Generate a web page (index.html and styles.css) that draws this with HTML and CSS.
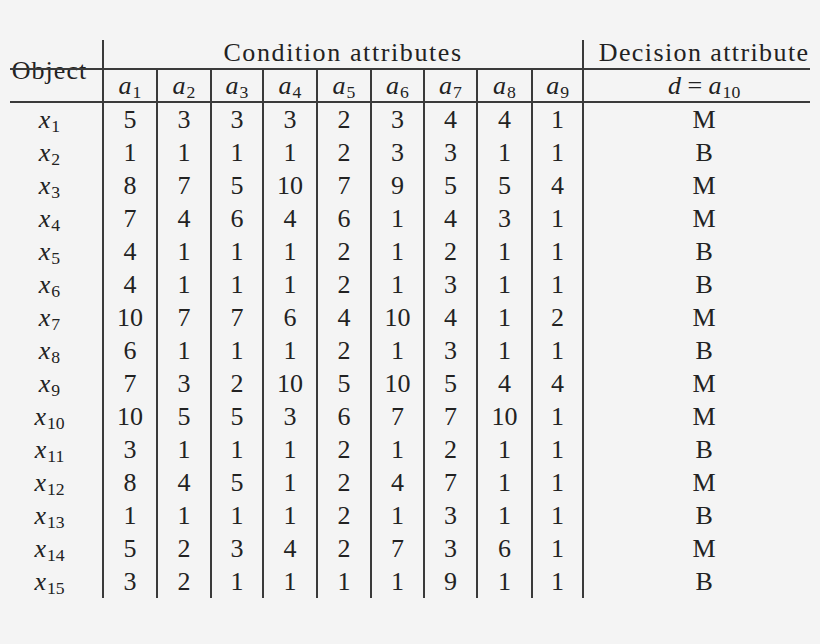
FILE: index.html
```html
<!DOCTYPE html>
<html>
<head>
<meta charset="utf-8">
<link rel="stylesheet" href="styles.css">
</head>
<body>
<table class="tbl">
  <colgroup>
    <col class="c-obj"><col class="c54"><col class="c54"><col class="c52"><col class="c54"><col class="c54"><col class="c53"><col class="c53"><col class="c55"><col class="c51"><col class="c-dec">
  </colgroup>
  <thead>
    <tr class="h1">
      <th class="obj" rowspan="2"><span class="obj-text">Object</span></th>
      <th class="cond" colspan="9">Condition attributes</th>
      <th class="dec">Decision attribute</th>
    </tr>
    <tr class="h2">
      <th class="a"><i>a</i><sub>1</sub></th>
      <th class="a"><i>a</i><sub>2</sub></th>
      <th class="a"><i>a</i><sub>3</sub></th>
      <th class="a"><i>a</i><sub>4</sub></th>
      <th class="a"><i>a</i><sub>5</sub></th>
      <th class="a"><i>a</i><sub>6</sub></th>
      <th class="a"><i>a</i><sub>7</sub></th>
      <th class="a"><i>a</i><sub>8</sub></th>
      <th class="a last"><i>a</i><sub>9</sub></th>
      <th class="dv"><i>d</i> = <i>a</i><sub>10</sub></th>
    </tr>
  </thead>
  <tbody>
    <tr><td class="lab"><i>x</i><sub>1</sub></td><td>5</td><td>3</td><td>3</td><td>3</td><td>2</td><td>3</td><td>4</td><td>4</td><td class="last">1</td><td class="dv">M</td></tr>
    <tr><td class="lab"><i>x</i><sub>2</sub></td><td>1</td><td>1</td><td>1</td><td>1</td><td>2</td><td>3</td><td>3</td><td>1</td><td class="last">1</td><td class="dv">B</td></tr>
    <tr><td class="lab"><i>x</i><sub>3</sub></td><td>8</td><td>7</td><td>5</td><td>10</td><td>7</td><td>9</td><td>5</td><td>5</td><td class="last">4</td><td class="dv">M</td></tr>
    <tr><td class="lab"><i>x</i><sub>4</sub></td><td>7</td><td>4</td><td>6</td><td>4</td><td>6</td><td>1</td><td>4</td><td>3</td><td class="last">1</td><td class="dv">M</td></tr>
    <tr><td class="lab"><i>x</i><sub>5</sub></td><td>4</td><td>1</td><td>1</td><td>1</td><td>2</td><td>1</td><td>2</td><td>1</td><td class="last">1</td><td class="dv">B</td></tr>
    <tr><td class="lab"><i>x</i><sub>6</sub></td><td>4</td><td>1</td><td>1</td><td>1</td><td>2</td><td>1</td><td>3</td><td>1</td><td class="last">1</td><td class="dv">B</td></tr>
    <tr><td class="lab"><i>x</i><sub>7</sub></td><td>10</td><td>7</td><td>7</td><td>6</td><td>4</td><td>10</td><td>4</td><td>1</td><td class="last">2</td><td class="dv">M</td></tr>
    <tr><td class="lab"><i>x</i><sub>8</sub></td><td>6</td><td>1</td><td>1</td><td>1</td><td>2</td><td>1</td><td>3</td><td>1</td><td class="last">1</td><td class="dv">B</td></tr>
    <tr><td class="lab"><i>x</i><sub>9</sub></td><td>7</td><td>3</td><td>2</td><td>10</td><td>5</td><td>10</td><td>5</td><td>4</td><td class="last">4</td><td class="dv">M</td></tr>
    <tr><td class="lab"><i>x</i><sub>10</sub></td><td>10</td><td>5</td><td>5</td><td>3</td><td>6</td><td>7</td><td>7</td><td>10</td><td class="last">1</td><td class="dv">M</td></tr>
    <tr><td class="lab"><i>x</i><sub>11</sub></td><td>3</td><td>1</td><td>1</td><td>1</td><td>2</td><td>1</td><td>2</td><td>1</td><td class="last">1</td><td class="dv">B</td></tr>
    <tr><td class="lab"><i>x</i><sub>12</sub></td><td>8</td><td>4</td><td>5</td><td>1</td><td>2</td><td>4</td><td>7</td><td>1</td><td class="last">1</td><td class="dv">M</td></tr>
    <tr><td class="lab"><i>x</i><sub>13</sub></td><td>1</td><td>1</td><td>1</td><td>1</td><td>2</td><td>1</td><td>3</td><td>1</td><td class="last">1</td><td class="dv">B</td></tr>
    <tr><td class="lab"><i>x</i><sub>14</sub></td><td>5</td><td>2</td><td>3</td><td>4</td><td>2</td><td>7</td><td>3</td><td>6</td><td class="last">1</td><td class="dv">M</td></tr>
    <tr><td class="lab"><i>x</i><sub>15</sub></td><td>3</td><td>2</td><td>1</td><td>1</td><td>1</td><td>1</td><td>9</td><td>1</td><td class="last">1</td><td class="dv">B</td></tr>
  </tbody>
</table>
</body>
</html>
```

FILE: styles.css
```css
html, body {
  margin: 0;
  padding: 0;
  background: #f4f4f4;
}
body {
  padding: 40px 0 0 10px;
  font-family: "Liberation Serif", serif;
  color: #222222;
}
.tbl {
  border-collapse: collapse;
  table-layout: fixed;
  width: 800px;
  font-size: 26px;
  font-family: "Liberation Serif", serif;
}
.c-obj { width: 93px; }
.c54 { width: 54px; }
.c52 { width: 52px; }
.c53 { width: 53px; }
.c55 { width: 55px; }
.c51 { width: 51px; }
.c-dec { width: 227px; }

.tbl th, .tbl td {
  padding: 0;
  text-align: center;
  vertical-align: middle;
  font-weight: normal;
  line-height: 1;
  white-space: nowrap;
}
.tbl td {
  height: 33px;
  border-right: 2px solid #3a3a3a;
}
.tbl td.dv, .tbl th.dv, .tbl th.dec { border-right: none; }
.tbl td.dv, .tbl th.dv, .tbl th.dec { padding-left: 14px; }
.tbl td.lab { padding-right: 13px; }

.h1 th { height: 26px; padding-bottom: 2px; }
.h2 th { height: 31px; border-right: 2px solid #3a3a3a; border-bottom: 2px solid #3a3a3a; }
.h2 th.dv { border-right: none; }

.cond {
  border-left: 2px solid #3a3a3a;
  border-right: 2px solid #3a3a3a;
  border-bottom: 2px solid #3a3a3a;
  letter-spacing: 1.6px;
}
.dec {
  border-bottom: 2px solid #3a3a3a;
  letter-spacing: 1.4px;
}
.obj {
  position: relative;
  border-right: 2px solid #3a3a3a;
  border-bottom: 2px solid #3a3a3a;
  padding-right: 13px !important;
  padding-bottom: 0 !important;
  letter-spacing: 1px;
}
.obj::after {
  content: "";
  position: absolute;
  left: 0;
  right: 0;
  top: 28px;
  height: 2px;
  background: #3a3a3a;
}
.obj-text {
  display: inline-block;
}
i {
  font-style: italic;
}
sub {
  font-size: 0.68em;
  vertical-align: -0.28em;
  line-height: 0;
  margin-left: 1px;
}
```
